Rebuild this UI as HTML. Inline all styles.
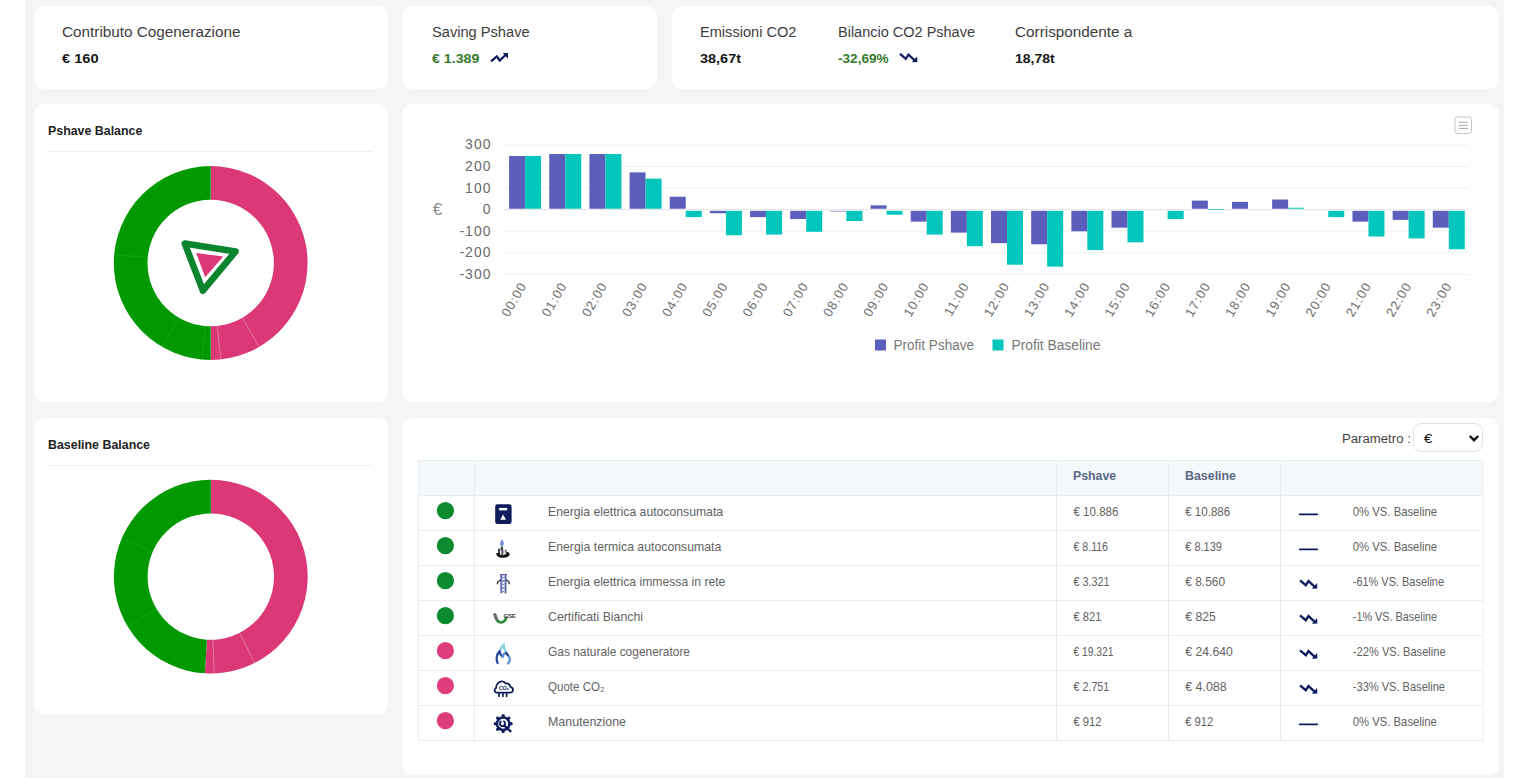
<!DOCTYPE html><html><head><meta charset="utf-8"><style>
html,body{margin:0;padding:0;}
body{width:1528px;height:778px;overflow:hidden;position:relative;background:#fff;font-family:"Liberation Sans", sans-serif;}
.bg{position:absolute;left:25.2px;top:0;width:1478.4px;height:778px;background:#f5f5f5;}
.card{position:absolute;background:#fff;border-radius:10px;}
svg text{font-family:"Liberation Sans", sans-serif;}
</style></head><body>
<div class="bg"></div>
<div class="card" style="left:33.7px;top:6px;width:354.6px;height:83px"></div>
<div class="card" style="left:402.4px;top:6px;width:254.4px;height:83px"></div>
<div class="card" style="left:671.6px;top:6px;width:827.6px;height:83px"></div>
<div class="card" style="left:33.7px;top:103.8px;width:354.6px;height:298.2px"></div>
<div class="card" style="left:402.4px;top:103.8px;width:1096.8px;height:298.2px"></div>
<div class="card" style="left:33.7px;top:418px;width:354.6px;height:297px"></div>
<div class="card" style="left:402.4px;top:418px;width:1096.8px;height:356.5px"></div>

<svg style="position:absolute;left:0;top:0" width="1528" height="778">
<text x="62" y="37" font-size="14" font-weight="normal" fill="#3d3d3d" textLength="178.50" lengthAdjust="spacingAndGlyphs">Contributo Cogenerazione</text>
<text x="62" y="63" font-size="13.4" font-weight="bold" fill="#161616" textLength="36.60" lengthAdjust="spacingAndGlyphs">€ 160</text>
<text x="432" y="37" font-size="14" font-weight="normal" fill="#3d3d3d" textLength="97.60" lengthAdjust="spacingAndGlyphs">Saving Pshave</text>
<text x="432" y="63" font-size="13.4" font-weight="bold" fill="#367a2c" textLength="47.30" lengthAdjust="spacingAndGlyphs">€ 1.389</text>
<g transform="translate(490.4,62)"><path d="M0.7,-0.7 L6.4,-5.6 L9.3,-1.5 L15.1,-7.0" stroke="#0f1c5c" stroke-width="2.3" fill="none" stroke-linejoin="miter"/><path d="M17.7,-8.9 L17.5,-3.3 L12.4,-9.1 Z" fill="#0f1c5c"/></g>
<text x="700" y="37" font-size="14" font-weight="normal" fill="#3d3d3d" textLength="96.40" lengthAdjust="spacingAndGlyphs">Emissioni CO2</text>
<text x="700" y="63" font-size="13.4" font-weight="bold" fill="#161616" textLength="41.00" lengthAdjust="spacingAndGlyphs">38,67t</text>
<text x="838" y="37" font-size="14" font-weight="normal" fill="#3d3d3d" textLength="137.00" lengthAdjust="spacingAndGlyphs">Bilancio CO2 Pshave</text>
<text x="838" y="63" font-size="13.4" font-weight="bold" fill="#367a2c" textLength="50.60" lengthAdjust="spacingAndGlyphs">-32,69%</text>
<g transform="translate(899.3,53.2)"><path d="M0.7,0.7 L6.5,5.6 L9.2,1.5 L15.2,7.0" stroke="#0f1c5c" stroke-width="2.3" fill="none" stroke-linejoin="miter"/><path d="M18.1,8.9 L17.8,3.3 L12.5,9.1 Z" fill="#0f1c5c"/></g>
<text x="1015" y="37" font-size="14" font-weight="normal" fill="#3d3d3d" textLength="117.30" lengthAdjust="spacingAndGlyphs">Corrispondente a</text>
<text x="1015" y="63" font-size="13.4" font-weight="bold" fill="#161616" textLength="39.70" lengthAdjust="spacingAndGlyphs">18,78t</text>
<text x="48" y="135.0" font-size="13" font-weight="bold" fill="#222" textLength="94.30" lengthAdjust="spacingAndGlyphs">Pshave Balance</text>
<rect x="48" y="151" width="325" height="1" fill="#efefef"/>
<text x="48" y="448.6" font-size="13" font-weight="bold" fill="#222" textLength="102.00" lengthAdjust="spacingAndGlyphs">Baseline Balance</text>
<rect x="48" y="465" width="325" height="1" fill="#efefef"/>
<path d="M210.70,166.10 A96.9,96.9 0 0 1 210.70,359.90 L210.70,326.20 A63.2,63.2 0 0 0 210.70,199.80 Z" fill="#dc3878"/>
<path d="M210.70,359.90 A96.9,96.9 0 0 1 210.70,166.10 L210.70,199.80 A63.2,63.2 0 0 0 210.70,326.20 Z" fill="#009a00"/>
<line x1="242.30" y1="317.73" x2="259.15" y2="346.92" stroke="#ffffff" stroke-width="0.7" opacity="0.45"/>
<line x1="217.31" y1="325.85" x2="220.83" y2="359.37" stroke="#ffffff" stroke-width="0.7" opacity="0.45"/>
<line x1="179.10" y1="317.73" x2="162.25" y2="346.92" stroke="#ffffff" stroke-width="0.7" opacity="0.12"/>
<line x1="147.74" y1="257.49" x2="114.17" y2="254.55" stroke="#ffffff" stroke-width="0.7" opacity="0.12"/>
<line x1="205.19" y1="325.96" x2="202.25" y2="359.53" stroke="#ffffff" stroke-width="0.7" opacity="0.12"/>
<path d="M210.80,479.70 A96.9,96.9 0 1 1 204.88,673.32 L206.94,639.68 A63.2,63.2 0 1 0 210.80,513.40 Z" fill="#dc3878"/>
<path d="M204.88,673.32 A96.9,96.9 0 0 1 210.80,479.70 L210.80,513.40 A63.2,63.2 0 0 0 206.94,639.68 Z" fill="#009a00"/>
<line x1="239.49" y1="632.91" x2="254.79" y2="662.94" stroke="#ffffff" stroke-width="0.7" opacity="0.45"/>
<line x1="213.01" y1="639.76" x2="214.18" y2="673.44" stroke="#ffffff" stroke-width="0.7" opacity="0.45"/>
<line x1="156.63" y1="609.15" x2="127.74" y2="626.51" stroke="#ffffff" stroke-width="0.7" opacity="0.12"/>
<line x1="152.62" y1="551.91" x2="121.60" y2="538.74" stroke="#ffffff" stroke-width="0.7" opacity="0.12"/>
<polygon points="184.8,243.6 235.6,251.4 202.9,290.6" fill="none" stroke="#0a842d" stroke-width="6.6" stroke-linejoin="round"/>
<polygon points="196.2,253 223.2,256.6 205.2,277.3" fill="#dc3878"/>
<line x1="504.4" y1="145.00" x2="1468.5" y2="145.00" stroke="#f0f0f0" stroke-width="1"/>
<line x1="504.4" y1="166.55" x2="1468.5" y2="166.55" stroke="#f0f0f0" stroke-width="1"/>
<line x1="504.4" y1="188.10" x2="1468.5" y2="188.10" stroke="#f0f0f0" stroke-width="1"/>
<line x1="504.4" y1="209.65" x2="1468.5" y2="209.65" stroke="#e3e3e3" stroke-width="1"/>
<line x1="504.4" y1="231.20" x2="1468.5" y2="231.20" stroke="#f0f0f0" stroke-width="1"/>
<line x1="504.4" y1="252.75" x2="1468.5" y2="252.75" stroke="#f0f0f0" stroke-width="1"/>
<line x1="504.4" y1="274.30" x2="1468.5" y2="274.30" stroke="#f0f0f0" stroke-width="1"/>
<rect x="509.10" y="155.99" width="16.00" height="52.76" fill="#5c5ebc"/>
<rect x="525.10" y="155.99" width="16.00" height="52.76" fill="#00c6bd"/>
<rect x="549.26" y="154.05" width="16.00" height="54.70" fill="#5c5ebc"/>
<rect x="565.26" y="154.05" width="16.00" height="54.70" fill="#00c6bd"/>
<rect x="589.42" y="154.05" width="16.00" height="54.70" fill="#5c5ebc"/>
<rect x="605.42" y="154.05" width="16.00" height="54.70" fill="#00c6bd"/>
<rect x="629.58" y="172.37" width="16.00" height="36.38" fill="#5c5ebc"/>
<rect x="645.58" y="178.62" width="16.00" height="30.13" fill="#00c6bd"/>
<rect x="669.74" y="196.72" width="16.00" height="12.03" fill="#5c5ebc"/>
<rect x="685.74" y="210.85" width="16.00" height="6.26" fill="#00c6bd"/>
<rect x="709.90" y="210.85" width="16.00" height="2.38" fill="#5c5ebc"/>
<rect x="725.90" y="210.85" width="16.00" height="24.36" fill="#00c6bd"/>
<rect x="750.06" y="210.85" width="16.00" height="6.26" fill="#5c5ebc"/>
<rect x="766.06" y="210.85" width="16.00" height="23.71" fill="#00c6bd"/>
<rect x="790.22" y="210.85" width="16.00" height="8.20" fill="#5c5ebc"/>
<rect x="806.22" y="210.85" width="16.00" height="20.91" fill="#00c6bd"/>
<rect x="830.38" y="210.85" width="16.00" height="0.60" fill="#5c5ebc"/>
<rect x="846.38" y="210.85" width="16.00" height="10.14" fill="#00c6bd"/>
<rect x="870.54" y="205.34" width="16.00" height="3.41" fill="#5c5ebc"/>
<rect x="886.54" y="210.85" width="16.00" height="3.89" fill="#00c6bd"/>
<rect x="910.70" y="210.85" width="16.00" height="10.78" fill="#5c5ebc"/>
<rect x="926.70" y="210.85" width="16.00" height="23.71" fill="#00c6bd"/>
<rect x="950.86" y="210.85" width="16.00" height="21.77" fill="#5c5ebc"/>
<rect x="966.86" y="210.85" width="16.00" height="35.35" fill="#00c6bd"/>
<rect x="991.02" y="210.85" width="16.00" height="32.33" fill="#5c5ebc"/>
<rect x="1007.02" y="210.85" width="16.00" height="53.88" fill="#00c6bd"/>
<rect x="1031.18" y="210.85" width="16.00" height="33.41" fill="#5c5ebc"/>
<rect x="1047.18" y="210.85" width="16.00" height="55.82" fill="#00c6bd"/>
<rect x="1071.34" y="210.85" width="16.00" height="20.48" fill="#5c5ebc"/>
<rect x="1087.34" y="210.85" width="16.00" height="39.23" fill="#00c6bd"/>
<rect x="1111.50" y="210.85" width="16.00" height="16.82" fill="#5c5ebc"/>
<rect x="1127.50" y="210.85" width="16.00" height="31.47" fill="#00c6bd"/>
<rect x="1167.66" y="210.85" width="16.00" height="8.20" fill="#00c6bd"/>
<rect x="1191.82" y="200.60" width="16.00" height="8.15" fill="#5c5ebc"/>
<rect x="1207.82" y="209.22" width="16.00" height="0.60" fill="#00c6bd"/>
<rect x="1231.98" y="201.89" width="16.00" height="6.86" fill="#5c5ebc"/>
<rect x="1272.14" y="199.52" width="16.00" height="9.23" fill="#5c5ebc"/>
<rect x="1288.14" y="207.71" width="16.00" height="1.04" fill="#00c6bd"/>
<rect x="1328.30" y="210.85" width="16.00" height="6.26" fill="#00c6bd"/>
<rect x="1352.46" y="210.85" width="16.00" height="10.78" fill="#5c5ebc"/>
<rect x="1368.46" y="210.85" width="16.00" height="25.65" fill="#00c6bd"/>
<rect x="1392.62" y="210.85" width="16.00" height="9.06" fill="#5c5ebc"/>
<rect x="1408.62" y="210.85" width="16.00" height="27.59" fill="#00c6bd"/>
<rect x="1432.78" y="210.85" width="16.00" height="16.82" fill="#5c5ebc"/>
<rect x="1448.78" y="210.85" width="16.00" height="38.37" fill="#00c6bd"/>
<text x="491.6" y="149.4" font-size="13.9" font-weight="normal" fill="#6a6a6a" letter-spacing="1.1" text-anchor="end">300</text>
<text x="491.6" y="170.95" font-size="13.9" font-weight="normal" fill="#6a6a6a" letter-spacing="1.1" text-anchor="end">200</text>
<text x="491.6" y="192.5" font-size="13.9" font-weight="normal" fill="#6a6a6a" letter-spacing="1.1" text-anchor="end">100</text>
<text x="491.6" y="214.05" font-size="13.9" font-weight="normal" fill="#6a6a6a" letter-spacing="1.1" text-anchor="end">0</text>
<text x="491.6" y="235.6" font-size="13.9" font-weight="normal" fill="#6a6a6a" letter-spacing="1.1" text-anchor="end">-100</text>
<text x="491.6" y="257.15" font-size="13.9" font-weight="normal" fill="#6a6a6a" letter-spacing="1.1" text-anchor="end">-200</text>
<text x="491.6" y="278.7" font-size="13.9" font-weight="normal" fill="#6a6a6a" letter-spacing="1.1" text-anchor="end">-300</text>
<text x="432.8" y="215.25" font-size="17" fill="#8a8a8a">€</text>
<text x="527.25" y="285.30" text-anchor="end" font-size="13" fill="#6e6e6e" letter-spacing="1.0" transform="rotate(-60 527.25 285.30)">00:00</text>
<text x="567.47" y="285.30" text-anchor="end" font-size="13" fill="#6e6e6e" letter-spacing="1.0" transform="rotate(-60 567.47 285.30)">01:00</text>
<text x="607.69" y="285.30" text-anchor="end" font-size="13" fill="#6e6e6e" letter-spacing="1.0" transform="rotate(-60 607.69 285.30)">02:00</text>
<text x="647.91" y="285.30" text-anchor="end" font-size="13" fill="#6e6e6e" letter-spacing="1.0" transform="rotate(-60 647.91 285.30)">03:00</text>
<text x="688.13" y="285.30" text-anchor="end" font-size="13" fill="#6e6e6e" letter-spacing="1.0" transform="rotate(-60 688.13 285.30)">04:00</text>
<text x="728.35" y="285.30" text-anchor="end" font-size="13" fill="#6e6e6e" letter-spacing="1.0" transform="rotate(-60 728.35 285.30)">05:00</text>
<text x="768.57" y="285.30" text-anchor="end" font-size="13" fill="#6e6e6e" letter-spacing="1.0" transform="rotate(-60 768.57 285.30)">06:00</text>
<text x="808.79" y="285.30" text-anchor="end" font-size="13" fill="#6e6e6e" letter-spacing="1.0" transform="rotate(-60 808.79 285.30)">07:00</text>
<text x="849.01" y="285.30" text-anchor="end" font-size="13" fill="#6e6e6e" letter-spacing="1.0" transform="rotate(-60 849.01 285.30)">08:00</text>
<text x="889.23" y="285.30" text-anchor="end" font-size="13" fill="#6e6e6e" letter-spacing="1.0" transform="rotate(-60 889.23 285.30)">09:00</text>
<text x="929.45" y="285.30" text-anchor="end" font-size="13" fill="#6e6e6e" letter-spacing="1.0" transform="rotate(-60 929.45 285.30)">10:00</text>
<text x="969.67" y="285.30" text-anchor="end" font-size="13" fill="#6e6e6e" letter-spacing="1.0" transform="rotate(-60 969.67 285.30)">11:00</text>
<text x="1009.89" y="285.30" text-anchor="end" font-size="13" fill="#6e6e6e" letter-spacing="1.0" transform="rotate(-60 1009.89 285.30)">12:00</text>
<text x="1050.11" y="285.30" text-anchor="end" font-size="13" fill="#6e6e6e" letter-spacing="1.0" transform="rotate(-60 1050.11 285.30)">13:00</text>
<text x="1090.33" y="285.30" text-anchor="end" font-size="13" fill="#6e6e6e" letter-spacing="1.0" transform="rotate(-60 1090.33 285.30)">14:00</text>
<text x="1130.55" y="285.30" text-anchor="end" font-size="13" fill="#6e6e6e" letter-spacing="1.0" transform="rotate(-60 1130.55 285.30)">15:00</text>
<text x="1170.77" y="285.30" text-anchor="end" font-size="13" fill="#6e6e6e" letter-spacing="1.0" transform="rotate(-60 1170.77 285.30)">16:00</text>
<text x="1210.99" y="285.30" text-anchor="end" font-size="13" fill="#6e6e6e" letter-spacing="1.0" transform="rotate(-60 1210.99 285.30)">17:00</text>
<text x="1251.21" y="285.30" text-anchor="end" font-size="13" fill="#6e6e6e" letter-spacing="1.0" transform="rotate(-60 1251.21 285.30)">18:00</text>
<text x="1291.43" y="285.30" text-anchor="end" font-size="13" fill="#6e6e6e" letter-spacing="1.0" transform="rotate(-60 1291.43 285.30)">19:00</text>
<text x="1331.65" y="285.30" text-anchor="end" font-size="13" fill="#6e6e6e" letter-spacing="1.0" transform="rotate(-60 1331.65 285.30)">20:00</text>
<text x="1371.87" y="285.30" text-anchor="end" font-size="13" fill="#6e6e6e" letter-spacing="1.0" transform="rotate(-60 1371.87 285.30)">21:00</text>
<text x="1412.09" y="285.30" text-anchor="end" font-size="13" fill="#6e6e6e" letter-spacing="1.0" transform="rotate(-60 1412.09 285.30)">22:00</text>
<text x="1452.31" y="285.30" text-anchor="end" font-size="13" fill="#6e6e6e" letter-spacing="1.0" transform="rotate(-60 1452.31 285.30)">23:00</text>
<rect x="875" y="339.5" width="11" height="11" fill="#5c5ebc"/>
<text x="893.5" y="349.5" font-size="14" font-weight="normal" fill="#787878" textLength="80.50" lengthAdjust="spacingAndGlyphs">Profit Pshave</text>
<rect x="992.5" y="339.5" width="11" height="11" fill="#00c6bd"/>
<text x="1011.5" y="349.5" font-size="14" font-weight="normal" fill="#787878" textLength="88.90" lengthAdjust="spacingAndGlyphs">Profit Baseline</text>
<rect x="1455" y="117" width="16.5" height="16.5" rx="2.5" fill="#fff" stroke="#c8c8c8" stroke-width="1"/>
<path d="M1458.7 122.2 H1467.8 M1458.7 125.3 H1467.8 M1458.7 128.4 H1467.8" stroke="#a8a8a8" stroke-width="1"/>
<text x="1342" y="442.6" font-size="12.5" font-weight="normal" fill="#444" textLength="68.80" lengthAdjust="spacingAndGlyphs">Parametro :</text>
<rect x="1413.5" y="423.5" width="69" height="28" rx="8" fill="#fff" stroke="#e2e2e2" stroke-width="1"/>
<text x="1423.8" y="442.6" font-size="14" transform="translate(1423.8,442.6) scale(1.12,0.95) translate(-1423.8,-442.6)" font-weight="normal" fill="#1a1a1a" letter-spacing="0.000">€</text>
<path d="M1469.8 436 L1474 440.2 L1478.2 436" stroke="#111" stroke-width="2.4" fill="none"/>
<rect x="418" y="460" width="1065" height="35" fill="#f4f9fb"/>
<rect x="418" y="460" width="1065" height="1" fill="#e9edf0"/>
<rect x="418" y="495" width="1065" height="1" fill="#e9edf0"/>
<rect x="418" y="530" width="1065" height="1" fill="#e9edf0"/>
<rect x="418" y="565" width="1065" height="1" fill="#e9edf0"/>
<rect x="418" y="600" width="1065" height="1" fill="#e9edf0"/>
<rect x="418" y="635" width="1065" height="1" fill="#e9edf0"/>
<rect x="418" y="670" width="1065" height="1" fill="#e9edf0"/>
<rect x="418" y="705" width="1065" height="1" fill="#e9edf0"/>
<rect x="418" y="740" width="1065" height="1" fill="#e9edf0"/>
<rect x="418" y="460" width="1" height="281" fill="#e9edf0"/>
<rect x="474" y="460" width="1" height="281" fill="#e9edf0"/>
<rect x="1056" y="460" width="1" height="281" fill="#e9edf0"/>
<rect x="1168" y="460" width="1" height="281" fill="#e9edf0"/>
<rect x="1280" y="460" width="1" height="281" fill="#e9edf0"/>
<rect x="1482.5" y="460" width="1" height="281" fill="#e9edf0"/>
<text x="1073" y="480.2" font-size="13" font-weight="bold" fill="#5b6785" textLength="43.20" lengthAdjust="spacingAndGlyphs">Pshave</text>
<text x="1185" y="480.2" font-size="13" font-weight="bold" fill="#5b6785" textLength="51.00" lengthAdjust="spacingAndGlyphs">Baseline</text>
<circle cx="445.4" cy="510.7" r="8.6" fill="#0b8a2f"/>
<g transform="translate(493,504)"><rect x="2.2" y="0.2" width="16.4" height="19.7" rx="2.2" fill="#0f1c5c"/><rect x="6.1" y="3.9" width="8.1" height="2.5" fill="#fff"/><path d="M10.1 10.6 L13 15.8 L7.2 15.8 Z" fill="#fff"/></g>
<text x="548" y="516" font-size="12.2" font-weight="normal" fill="#626262" textLength="175.10" lengthAdjust="spacingAndGlyphs">Energia elettrica autoconsumata</text>
<text x="1073.5" y="516" font-size="12.2" font-weight="normal" fill="#626262" textLength="44.90" lengthAdjust="spacingAndGlyphs">€ 10.886</text>
<text x="1185.2" y="516" font-size="12.2" font-weight="normal" fill="#626262" textLength="45.00" lengthAdjust="spacingAndGlyphs">€ 10.886</text>
<rect x="1298.8" y="513.5" width="19.3" height="1.7" rx="0.8" fill="#0f1c5c"/>
<text x="1352.8" y="516" font-size="12.2" font-weight="normal" fill="#626262" textLength="84.20" lengthAdjust="spacingAndGlyphs">0% VS. Baseline</text>
<circle cx="445.4" cy="545.7" r="8.6" fill="#0b8a2f"/>
<g transform="translate(493,539)"><path d="M9 0.3 C10.8 2.5 11.5 4.8 10.2 6.6 C9.4 7.4 8 7.2 7.4 6.2 C6.6 4.6 7.6 2.5 9 0.3Z" fill="#6f8cdc"/><rect x="7.7" y="7.6" width="2.4" height="4" fill="#2f4a3c"/><rect x="5" y="9.7" width="2" height="5" fill="#3c3c3c"/><rect x="8.3" y="10.5" width="2.1" height="5.5" fill="#5b5068"/><rect x="11.7" y="10.6" width="2" height="3.2" fill="#7a7a7a"/><ellipse cx="14.6" cy="15.2" rx="1.9" ry="2.2" fill="#151515"/><path d="M3.3 14 C3.3 17.5 6 18.8 10 18.8 C14 18.8 16 17.5 16.2 15.5 L12 15.2 L10.4 16.2 L7 15.8 L7 14 Z" fill="#111"/></g>
<text x="548" y="551" font-size="12.2" font-weight="normal" fill="#626262" textLength="173.30" lengthAdjust="spacingAndGlyphs">Energia termica autoconsumata</text>
<text x="1073.5" y="551" font-size="12.2" font-weight="normal" fill="#626262" textLength="34.50" lengthAdjust="spacingAndGlyphs">€ 8.116</text>
<text x="1185.2" y="551" font-size="12.2" font-weight="normal" fill="#626262" textLength="36.80" lengthAdjust="spacingAndGlyphs">€ 8.139</text>
<rect x="1298.8" y="548.5" width="19.3" height="1.7" rx="0.8" fill="#0f1c5c"/>
<text x="1352.8" y="551" font-size="12.2" font-weight="normal" fill="#626262" textLength="84.20" lengthAdjust="spacingAndGlyphs">0% VS. Baseline</text>
<circle cx="445.4" cy="580.7" r="8.6" fill="#0b8a2f"/>
<g transform="translate(493,574)"><path d="M7.2 0.7 H13.6" stroke="#3c4592" stroke-width="1.2"/><path d="M8 0.8 L8 19 M12.8 0.8 L12.8 19" stroke="#3d4798" stroke-width="1.2"/><path d="M8 2 L12.8 5 M12.8 2 L8 5 M8 5.5 L12.8 8.5 M12.8 5.5 L8 8.5 M8 9 L12.8 12 M12.8 9 L8 12 M8 12.5 L12.8 15.5 M12.8 12.5 L8 15.5 M8 16 L12.8 19 M12.8 16 L8 19" stroke="#4a55a8" stroke-width="0.9" opacity="0.85"/><path d="M8 5.8 L5.2 7.4 L4.1 10.2 M12.8 5.8 L15.6 7.4 L16.7 10.2" stroke="#2c2f4a" stroke-width="1.3" fill="none"/><path d="M12.3 19 H13.2" stroke="#777" stroke-width="1.5"/></g>
<text x="548" y="586" font-size="12.2" font-weight="normal" fill="#626262" textLength="177.40" lengthAdjust="spacingAndGlyphs">Energia elettrica immessa in rete</text>
<text x="1073.5" y="586" font-size="12.2" font-weight="normal" fill="#626262" textLength="36.00" lengthAdjust="spacingAndGlyphs">€ 3.321</text>
<text x="1185.2" y="586" font-size="12.2" font-weight="normal" fill="#626262" textLength="39.90" lengthAdjust="spacingAndGlyphs">€ 8.560</text>
<g transform="translate(1299.3,579.6)"><path d="M0.7,0.7 L6.5,5.6 L9.2,1.5 L15.2,7.0" stroke="#0f1c5c" stroke-width="2.3" fill="none" stroke-linejoin="miter"/><path d="M18.1,8.9 L17.8,3.3 L12.5,9.1 Z" fill="#0f1c5c"/></g>
<text x="1352.8" y="586" font-size="12.2" font-weight="normal" fill="#626262" textLength="91.20" lengthAdjust="spacingAndGlyphs">-61% VS. Baseline</text>
<circle cx="445.4" cy="615.7" r="8.6" fill="#0b8a2f"/>
<g transform="translate(493,609)"><path d="M1.9 5.6 C3 10.5 5.5 13.4 8.2 13.3 C10.5 13.2 12.5 11 13.4 8.7" stroke="#2f8f3f" stroke-width="2.8" fill="none" stroke-linecap="round"/><path d="M1.9 5.6 C2.4 7.5 3 8.8 3.8 9.8" stroke="#6a6a6a" stroke-width="2.8" fill="none" stroke-linecap="round"/><text x="10.6" y="9.4" font-size="6.2" font-weight="bold" fill="#4a4a4a" letter-spacing="-0.4">GSE</text></g>
<text x="548" y="621" font-size="12.2" font-weight="normal" fill="#626262" textLength="95.00" lengthAdjust="spacingAndGlyphs">Certificati Bianchi</text>
<text x="1073.5" y="621" font-size="12.2" font-weight="normal" fill="#626262" textLength="28.10" lengthAdjust="spacingAndGlyphs">€ 821</text>
<text x="1185.2" y="621" font-size="12.2" font-weight="normal" fill="#626262" textLength="30.60" lengthAdjust="spacingAndGlyphs">€ 825</text>
<g transform="translate(1299.3,614.6)"><path d="M0.7,0.7 L6.5,5.6 L9.2,1.5 L15.2,7.0" stroke="#0f1c5c" stroke-width="2.3" fill="none" stroke-linejoin="miter"/><path d="M18.1,8.9 L17.8,3.3 L12.5,9.1 Z" fill="#0f1c5c"/></g>
<text x="1352.8" y="621" font-size="12.2" font-weight="normal" fill="#626262" textLength="84.30" lengthAdjust="spacingAndGlyphs">-1% VS. Baseline</text>
<circle cx="445.4" cy="650.7" r="8.6" fill="#de3d7c"/>
<g transform="translate(493,644)"><path d="M6.6 7.5 C7.6 4.6 9 2.3 10.6 0.9 C10.6 3.5 11.5 6 13.2 8.6" stroke="#86d3e6" stroke-width="2.2" fill="none" stroke-linecap="round"/><path d="M4.6 19 C2.6 14.5 4 9.6 6.6 7.5 C7.2 10.2 8.2 12 9.6 12.6" stroke="#2a4a9c" stroke-width="2.3" fill="none" stroke-linecap="round"/><path d="M9.6 12.6 C10.2 10.4 11.5 9.2 13.2 8.6 C14.4 11.2 17.2 12.5 16.8 16 C16.6 17.8 15.8 18.8 15.2 19.4" stroke="#5a8fd8" stroke-width="2.3" fill="none" stroke-linecap="round"/><path d="M12.8 8.4 C13.6 10 14.4 11 15.5 12" stroke="#1a2f7a" stroke-width="1.6" fill="none"/></g>
<text x="548" y="656" font-size="12.2" font-weight="normal" fill="#626262" textLength="142.00" lengthAdjust="spacingAndGlyphs">Gas naturale cogeneratore</text>
<text x="1073.5" y="656" font-size="12.2" font-weight="normal" fill="#626262" textLength="39.90" lengthAdjust="spacingAndGlyphs">€ 19.321</text>
<text x="1185.2" y="656" font-size="12.2" font-weight="normal" fill="#626262" textLength="47.60" lengthAdjust="spacingAndGlyphs">€ 24.640</text>
<g transform="translate(1299.3,649.6)"><path d="M0.7,0.7 L6.5,5.6 L9.2,1.5 L15.2,7.0" stroke="#0f1c5c" stroke-width="2.3" fill="none" stroke-linejoin="miter"/><path d="M18.1,8.9 L17.8,3.3 L12.5,9.1 Z" fill="#0f1c5c"/></g>
<text x="1352.8" y="656" font-size="12.2" font-weight="normal" fill="#626262" textLength="92.90" lengthAdjust="spacingAndGlyphs">-22% VS. Baseline</text>
<circle cx="445.4" cy="685.7" r="8.6" fill="#de3d7c"/>
<g transform="translate(493,679)"><path d="M3.6 13.7 C1.5 13.7 0.9 10.3 2.9 9.2 C2.9 5.8 5.6 2.3 9.2 2.4 C10.8 2.5 11.8 3.2 12.8 4.5 C14.8 4 17 5.3 17.4 7.8 C19.4 8.4 20.3 10 19.9 11.6 C19.5 13.1 18.5 13.7 17.2 13.7 Z" stroke="#0f1c5c" stroke-width="1.8" fill="none" stroke-linejoin="round"/><text x="5.8" y="11.2" font-size="5.6" font-weight="bold" fill="#0f1c5c" letter-spacing="-0.3">CO₂</text><path d="M6 14.4 L6 17.3 M9.9 14.4 L9.9 17.3 M13.6 14.4 L13.6 17.3" stroke="#0f1c5c" stroke-width="1.7" stroke-linecap="round"/></g>
<text x="548" y="691" font-size="12.2" font-weight="normal" fill="#626262" textLength="56.50" lengthAdjust="spacingAndGlyphs">Quote CO₂</text>
<text x="1073.5" y="691" font-size="12.2" font-weight="normal" fill="#626262" textLength="35.80" lengthAdjust="spacingAndGlyphs">€ 2.751</text>
<text x="1185.2" y="691" font-size="12.2" font-weight="normal" fill="#626262" textLength="41.40" lengthAdjust="spacingAndGlyphs">€ 4.088</text>
<g transform="translate(1299.3,684.6)"><path d="M0.7,0.7 L6.5,5.6 L9.2,1.5 L15.2,7.0" stroke="#0f1c5c" stroke-width="2.3" fill="none" stroke-linejoin="miter"/><path d="M18.1,8.9 L17.8,3.3 L12.5,9.1 Z" fill="#0f1c5c"/></g>
<text x="1352.8" y="691" font-size="12.2" font-weight="normal" fill="#626262" textLength="92.20" lengthAdjust="spacingAndGlyphs">-33% VS. Baseline</text>
<circle cx="445.4" cy="720.7" r="8.6" fill="#de3d7c"/>
<g transform="translate(493,714)"><rect x="8.7" y="0.29999999999999893" width="3" height="4" rx="0.9" fill="#0f1c5c" transform="rotate(0 10.2 9.7)"/><rect x="8.7" y="0.29999999999999893" width="3" height="4" rx="0.9" fill="#0f1c5c" transform="rotate(45 10.2 9.7)"/><rect x="8.7" y="0.29999999999999893" width="3" height="4" rx="0.9" fill="#0f1c5c" transform="rotate(90 10.2 9.7)"/><rect x="8.7" y="0.29999999999999893" width="3" height="4" rx="0.9" fill="#0f1c5c" transform="rotate(180 10.2 9.7)"/><rect x="8.7" y="0.29999999999999893" width="3" height="4" rx="0.9" fill="#0f1c5c" transform="rotate(225 10.2 9.7)"/><rect x="8.7" y="0.29999999999999893" width="3" height="4" rx="0.9" fill="#0f1c5c" transform="rotate(270 10.2 9.7)"/><rect x="8.7" y="0.29999999999999893" width="3" height="4" rx="0.9" fill="#0f1c5c" transform="rotate(315 10.2 9.7)"/><circle cx="10.2" cy="9.7" r="6.2" fill="none" stroke="#0f1c5c" stroke-width="2.4"/><path d="M11.2 7.6 A2.6 2.6 0 1 1 9.4 7.1" stroke="#0f1c5c" stroke-width="1.9" fill="none" transform="rotate(-20 9.2 10)"/><path d="M11.3 11.6 L17.4 17.2" stroke="#0f1c5c" stroke-width="2.4" stroke-linecap="round"/></g>
<text x="548" y="726" font-size="12.2" font-weight="normal" fill="#626262" textLength="78.00" lengthAdjust="spacingAndGlyphs">Manutenzione</text>
<text x="1073.5" y="726" font-size="12.2" font-weight="normal" fill="#626262" textLength="28.10" lengthAdjust="spacingAndGlyphs">€ 912</text>
<text x="1185.2" y="726" font-size="12.2" font-weight="normal" fill="#626262" textLength="28.10" lengthAdjust="spacingAndGlyphs">€ 912</text>
<rect x="1298.8" y="723.5" width="19.3" height="1.7" rx="0.8" fill="#0f1c5c"/>
<text x="1352.8" y="726" font-size="12.2" font-weight="normal" fill="#626262" textLength="84.10" lengthAdjust="spacingAndGlyphs">0% VS. Baseline</text>
</svg>
</body></html>
